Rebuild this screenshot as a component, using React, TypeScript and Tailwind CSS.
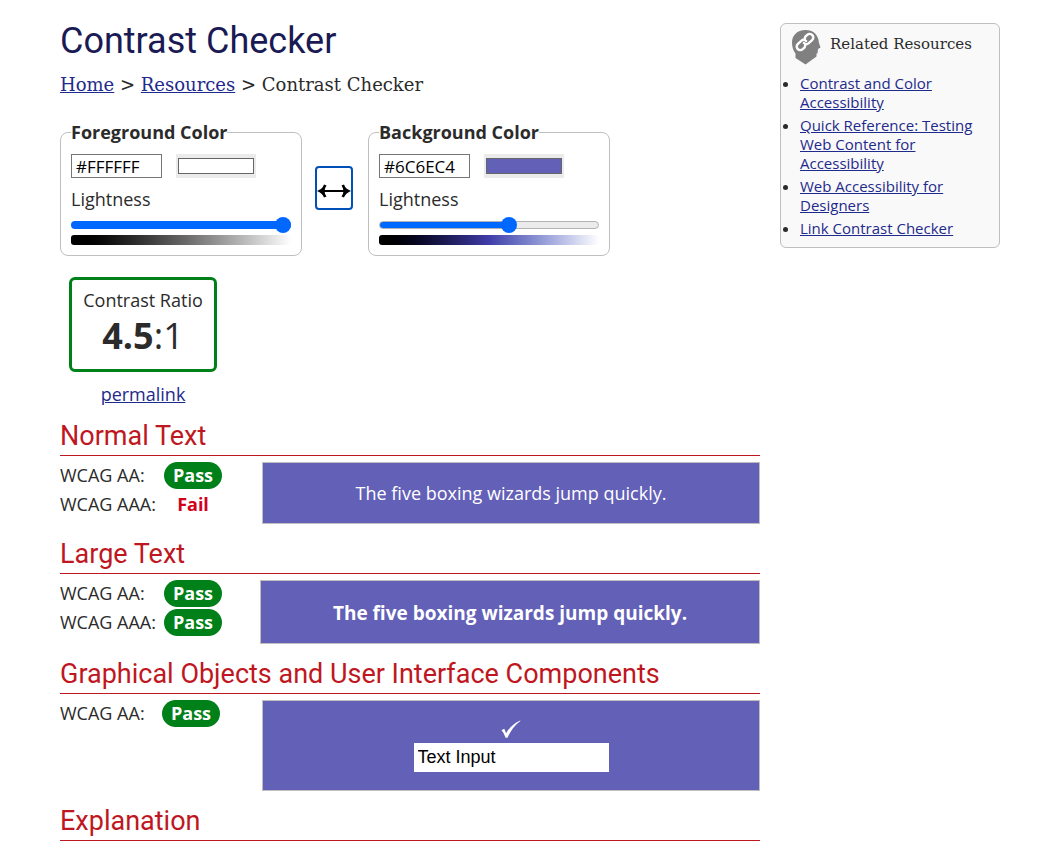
import { useState } from "react";
import type { ReactNode } from "react";

const link = "text-[#1e2a8c] underline";
const slab = "font-['DejaVu_Serif',serif]";

type ColorFieldProps = {
  id: string;
  legend: string;
  initial: string;
  swatch: string;
  level: number;
  fill: string;
  gradient: string;
};

function ColorField({ id, legend, initial, swatch, level, fill, gradient }: ColorFieldProps) {
  const [hex, setHex] = useState(initial);
  const [color, setColor] = useState(swatch);
  const [value, setValue] = useState(level);
  return (
    <fieldset className="w-[242px] rounded-lg border border-[#bfbfbf] px-[10px] pb-[10px]">
      <legend className="text-lg leading-6 font-bold">{legend}</legend>
      <div className="mt-[10px] flex gap-[14px]">
        <input
          type="text"
          aria-label={`${legend} hex value`}
          value={hex}
          onChange={(e) => setHex(e.target.value)}
          className="h-6 w-[91px] border border-[#767676] px-1 text-[17px] leading-5 text-black"
        />
        <input
          type="color"
          aria-label={`${legend} picker`}
          value={color}
          onChange={(e) => setColor(e.target.value)}
          className="h-6 w-[80px] bg-[#ebebeb] px-[2px] py-1 [&::-webkit-color-swatch]:rounded-none [&::-webkit-color-swatch]:border-[#666] [&::-webkit-color-swatch-wrapper]:p-0"
        />
      </div>
      <label htmlFor={id} className="mt-2 block text-lg leading-[26px]">
        Lightness
      </label>
      <input
        id={id}
        type="range"
        min={0}
        max={100}
        value={value}
        onChange={(e) => setValue(Number(e.target.value))}
        className={`mt-[5px] block h-4 w-full appearance-none bg-transparent [&::-webkit-slider-runnable-track]:h-2 [&::-webkit-slider-runnable-track]:rounded-full [&::-webkit-slider-thumb]:size-4 [&::-webkit-slider-thumb]:appearance-none [&::-webkit-slider-thumb]:rounded-full [&::-webkit-slider-thumb]:bg-[#0067ff] ${fill}`}
      />
      <div className={`mt-[2px] h-[10px] rounded-[3px] ${gradient}`} />
    </fieldset>
  );
}

function Heading({ children }: { children: ReactNode }) {
  return (
    <h2 className="border-b border-[#bf1722] pb-[2px] font-[Roboto,sans-serif] text-[27px] leading-[34px] text-[#bf1722]">
      {children}
    </h2>
  );
}

function Result({ level, pass, narrow = false }: { level: string; pass: boolean; narrow?: boolean }) {
  return (
    <div className="flex h-[29px] items-start">
      <dt className={narrow ? "w-[102px] text-lg leading-[27px]" : "w-[104px] text-lg leading-[27px]"}>WCAG {level}:</dt>
      <dd
        className={
          pass
            ? "w-[58px] rounded-full bg-[#008018] text-center text-lg leading-[27px] font-bold text-white"
            : "w-[58px] text-center text-lg leading-[27px] font-bold text-[#d0021b]"
        }
      >
        {pass ? "Pass" : "Fail"}
      </dd>
    </div>
  );
}

const resources = [
  "Contrast and Color Accessibility",
  "Quick Reference: Testing Web Content for Accessibility",
  "Web Accessibility for Designers",
  "Link Contrast Checker",
];

export default function App() {
  const [sample, setSample] = useState("Text Input");
  return (
    <div className="flex min-h-screen items-start gap-5 bg-white pr-[46px] pl-[60px] font-['Open_Sans',sans-serif] text-[#2b2b2b]">
      <main className="min-w-0 flex-1 pt-[19px]">
        <h1 className="font-[Roboto,sans-serif] text-[36px] leading-[44px] text-[#1a1a54]">Contrast Checker</h1>
        <nav aria-label="Breadcrumb" className={`${slab} mt-[10px] text-lg leading-6`}>
          <a href="#home" className={link}>Home</a> &gt; <a href="#resources" className={link}>Resources</a> &gt;{" "}
          Contrast Checker
        </nav>

        <form className="mt-[23px] flex items-start">
          <ColorField
            id="fg-lightness"
            legend="Foreground Color"
            initial="#FFFFFF"
            swatch="#ffffff"
            level={100}
            fill="[&::-webkit-slider-runnable-track]:bg-[#0067ff] [&::-webkit-slider-thumb]:-mt-1"
            gradient="bg-linear-to-r from-black to-white"
          />
          <button
            type="button"
            aria-label="Swap colors"
            className="mr-[15px] ml-[13px] mt-[46px] flex h-11 w-[38px] items-end justify-center rounded border-2 border-[#0050b8] pb-[10px]"
          >
            <svg viewBox="0 0 34 14" className="h-[14px] w-[34px]" fill="#000" aria-hidden="true">
              <path d="M4 6H30V8H4Z" />
              <path d="M7 0.500Q5.500 5 0 7Q5.500 9 7 13.500L9.500 12.500Q7.500 9.500 7.500 7Q7.500 4.500 9.500 1.500ZM27 0.500Q28.500 5 34 7Q28.500 9 27 13.500L24.500 12.500Q26.500 9.500 26.500 7Q26.500 4.500 24.500 1.500Z" />
            </svg>
          </button>
          <ColorField
            id="bg-lightness"
            legend="Background Color"
            initial="#6C6EC4"
            swatch="#6360b8"
            level={60}
            fill="[&::-webkit-slider-runnable-track]:border [&::-webkit-slider-runnable-track]:border-[#b2b2b2] [&::-webkit-slider-runnable-track]:bg-linear-to-r [&::-webkit-slider-runnable-track]:from-[#0067ff] [&::-webkit-slider-runnable-track]:from-60% [&::-webkit-slider-runnable-track]:to-[#ebebeb] [&::-webkit-slider-runnable-track]:to-60% [&::-webkit-slider-thumb]:-mt-[5px]"
            gradient="bg-linear-to-r from-black via-[#403ca8] to-white"
          />
        </form>

        <div className="mt-[21px] ml-[9px] w-[148px] text-center">
          <div className="rounded-md border-3 border-[#008018] pt-2 pb-[9px]">
            <div className="text-lg leading-6">Contrast Ratio</div>
            <div className="text-[36px] leading-[48px]">
              <b>4.5</b>:1
            </div>
          </div>
          <a href="#permalink" className={`${link} mt-[9px] inline-block text-lg leading-[26px]`}>permalink</a>
        </div>

        <section className="mt-3">
          <Heading>Normal Text</Heading>
          <div className="mt-[6px] flex items-start">
            <dl className="w-[202px]">
              <Result level="AA" pass />
              <Result level="AAA" pass={false} />
            </dl>
            <p className="flex h-[62px] flex-1 items-center justify-center border border-[#bfbfbf] bg-[#6360b8] text-lg text-white">
              The five boxing wizards jump quickly.
            </p>
          </div>
        </section>

        <section className="mt-[13px]">
          <Heading>Large Text</Heading>
          <div className="mt-[6px] flex items-start">
            <dl className="w-[200px]">
              <Result level="AA" pass />
              <Result level="AAA" pass />
            </dl>
            <p className="flex h-[64px] flex-1 items-center justify-center border border-[#bfbfbf] bg-[#6360b8] pt-[2px] text-[19px] font-bold text-white">
              The five boxing wizards jump quickly.
            </p>
          </div>
        </section>

        <section className="mt-[13px]">
          <Heading>Graphical Objects and User Interface Components</Heading>
          <div className="mt-[6px] flex items-start">
            <dl className="w-[202px]">
              <Result level="AA" pass narrow />
            </dl>
            <div className="flex h-[91px] flex-1 flex-col items-center border border-[#bfbfbf] bg-[#6360b8] pt-[18px] text-white">
              <svg viewBox="0 0 20 20" className="mb-1 h-5 w-5" fill="#fff" role="img" aria-label="Check mark">
                <path d="M0.5 11.200L3.200 9.800Q4.300 11.800 5 14.200Q10.500 5.200 19.200 1.500L19.400 2Q11.500 7.600 6.500 18.800H4.600Q3 13.600 0.500 11.200Z" />
              </svg>
              <input
                type="text"
                aria-label="Sample text input"
                value={sample}
                onChange={(e) => setSample(e.target.value)}
                className="h-[29px] w-[195px] bg-white px-1 font-['Liberation_Sans',sans-serif] text-lg leading-6 text-black"
              />
            </div>
          </div>
        </section>

        <section className="mt-[13px]">
          <Heading>Explanation</Heading>
        </section>
      </main>

      <aside className="mt-[23px] w-[220px] rounded-md border border-[#bfbfbf] bg-[#f9f9f9] pb-[5px]">
        <div className="flex gap-[9px] pt-[5px] pl-[10px]">
          <svg viewBox="0 0 30 36" className="h-9 w-[30px]" aria-hidden="true">
            <path d="M14.5 1C6 1 1 6.500 1 13.500C1 18 2.200 21.500 4.500 24.500V29L14.500 35.500L25.500 27.500V24.500H26.500L27 20L29.500 18.500L28 14C27.500 5.500 22 1 14.500 1Z" fill="#808080" />
            <g transform="rotate(-42 14 13)" fill="none" stroke="#fff" strokeWidth="2.400" strokeLinecap="round">
              <path d="M12 15.500A3.600 3.600 0 0 1 8.500 16.800H7.500A3.600 3.600 0 0 1 7.500 9.600H12A3.600 3.600 0 0 1 15.500 13" />
              <path d="M16 10.500A3.600 3.600 0 0 1 18.500 9.200H20.500A3.600 3.600 0 0 1 20.500 16.400H16A3.600 3.600 0 0 1 12.500 13" />
            </g>
          </svg>
          <h2 className={`${slab} text-[15px] leading-[30px]`}>Related Resources</h2>
        </div>
        <ul className="mt-[9px] list-disc pr-4 pl-[19px] text-[15px] leading-[19px]">
          {resources.map((name) => (
            <li key={name} className="mb-1">
              <a href="#resource" className={link}>{name}</a>
            </li>
          ))}
        </ul>
      </aside>
    </div>
  );
}
